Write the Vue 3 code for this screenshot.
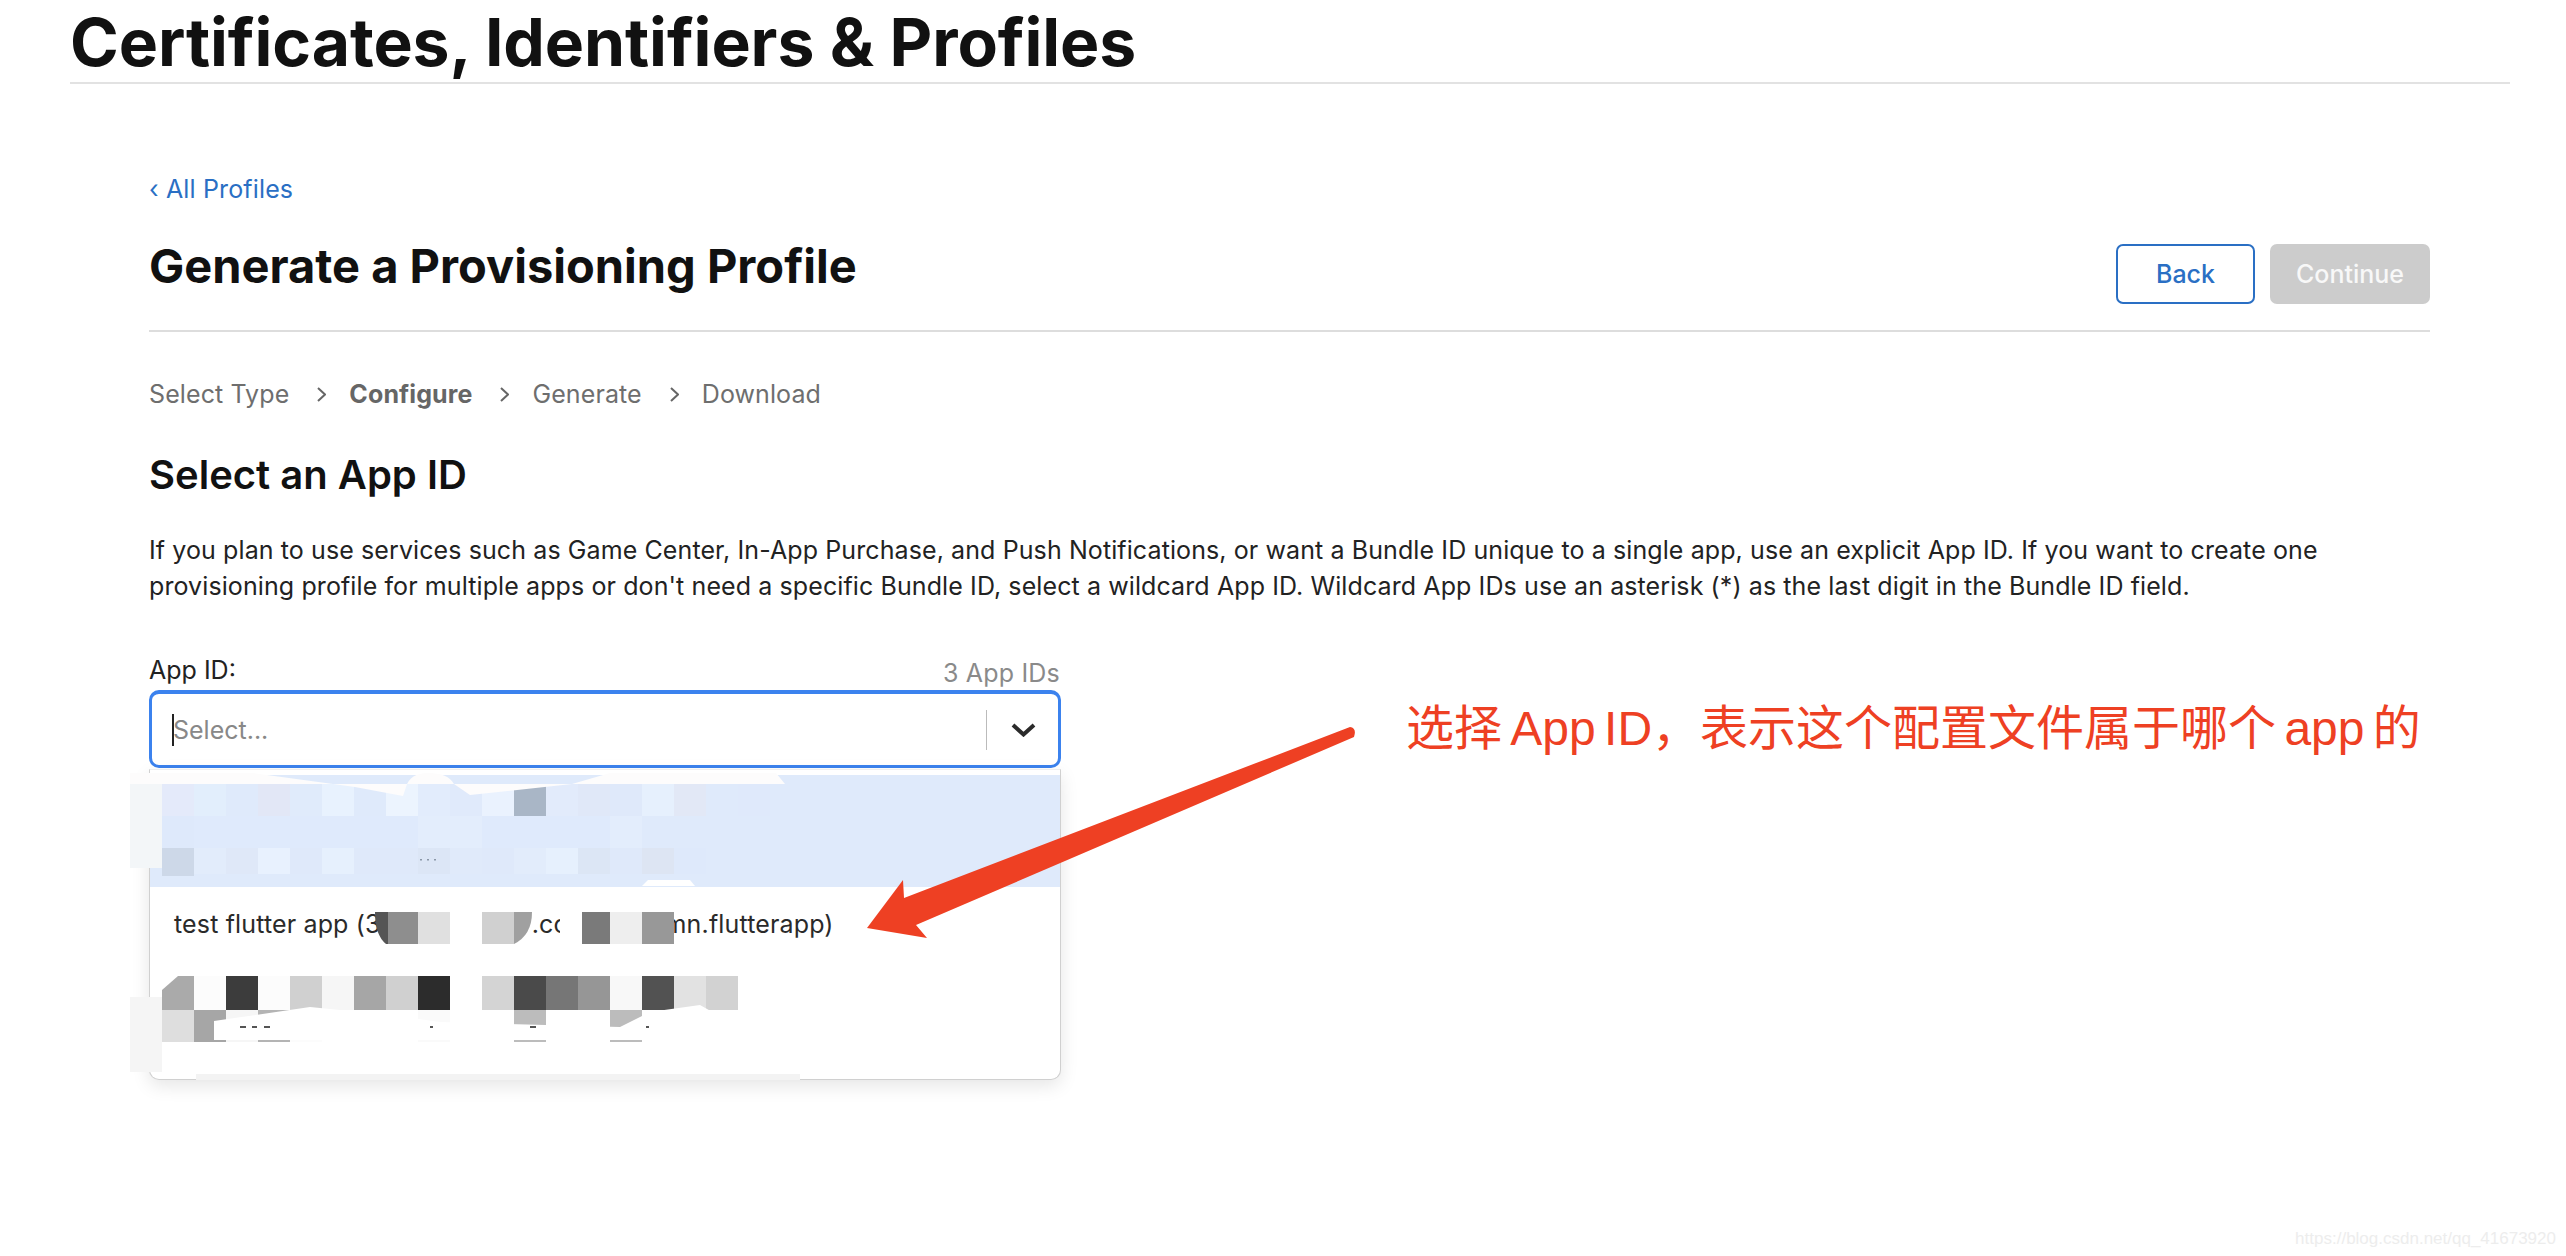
<script setup>
const sel1 = ['#e4eafa','#e2eefc','#dfeafb','#e2e7f6','#e0ebfb','#e8f2fe','#dfeafb','#ecf4fe','#e2ecfc','#e0eafb','#eaf2fe','#a9b6c6','#e2ebfb','#e0e8f8','#dfe9fa','#e6f0fd','#e2e8f6','#dfeafb','#dfe9fb']
const sel2 = ['#dee9fb','#dfeafc','#dfeafc','#dfeafc','#dfeafc','#dfeafc','#dfeafc','#dfeafc','#e3edfc','#e3edfc','#dfeafc','#dfeafc','#dfeafc','#dfeafc','#e3edfc']
const sel3 = ['#cdd8e8','#e2ecfb','#dfe8f8','#e8f1fe','#dfe9fa','#e6f0fd','#dfe9fa','#dfe9fa','#dce6f6','#e0eafa','#dfe9fa','#e2ecfb','#e6f0fd','#dce6f5','#dfe9fa','#dde5f3','#dee9fb']
const test1 = { 7:'#8e8e8e', 8:'#e0e0e0', 10:'#d0d0d0', 13:'#7a7a7a', 14:'#eeeeee', 15:'#989898' }
const low1 = ['#aaaaaa','#fcfcfc','#3c3c3c','#fcfcfc','#d0d0d0','#f6f6f6','#a6a6a6','#d0d0d0','#2c2c2c','#ffffff','#d4d4d4','#4a4a4a','#767676','#969696','#f8f8f8','#525252','#e2e2e2','#d2d2d2']
const low2 = ['#dedede','#a6a6a6','#f6f6f6','#b4b4b4','#fcfcfc','#ffffff','#ffffff','#ffffff','#fafafa','#ffffff','#ffffff','#bcbcbc','#ffffff','#ffffff','#bcbcbc']
const cx = k => 162 + k * 32
const cells = []
sel1.forEach((c, k) => cells.push({ x: cx(k), y: 784, w: 32, h: 32, c }))
sel2.forEach((c, k) => cells.push({ x: cx(k), y: 816, w: 32, h: 32, c }))
sel3.forEach((c, k) => cells.push({ x: cx(k), y: 848, w: 32, h: k === 0 ? 28 : 26, c }))
Object.entries(test1).forEach(([k, c]) => cells.push({ x: cx(+k), y: 912, w: 32, h: 32, c }))
low1.forEach((c, k) => cells.push({ x: cx(k), y: 976, w: 32, h: 34, c }))
low2.forEach((c, k) => cells.push({ x: cx(k), y: 1010, w: 32, h: 32, c }))
</script>

<template>
  <div class="page">
    <header class="top"><h1>Certificates, Identifiers &amp; Profiles</h1></header>
    <main class="main">
      <a class="backlink">‹ All Profiles</a>
      <div class="headrow">
        <h2>Generate a Provisioning Profile</h2>
        <div class="btns">
          <button class="btn back">Back</button>
          <button class="btn cont">Continue</button>
        </div>
      </div>
      <nav class="steps">
        <span>Select Type</span>
        <svg class="sep" width="9" height="15" viewBox="0 0 9 15"><path d="M1 1l7 6.500L1 14" fill="none" stroke="#666" stroke-width="2"/></svg>
        <b>Configure</b>
        <svg class="sep" width="9" height="15" viewBox="0 0 9 15"><path d="M1 1l7 6.500L1 14" fill="none" stroke="#666" stroke-width="2"/></svg>
        <span>Generate</span>
        <svg class="sep" width="9" height="15" viewBox="0 0 9 15"><path d="M1 1l7 6.500L1 14" fill="none" stroke="#666" stroke-width="2"/></svg>
        <span>Download</span>
      </nav>
      <h3>Select an App ID</h3>
      <p class="desc">If you plan to use services such as Game Center, In-App Purchase, and Push Notifications, or want a Bundle ID unique to a single app, use an explicit App ID. If you want to create one provisioning profile for multiple apps or don't need a specific Bundle ID, select a wildcard App ID. Wildcard App IDs use an asterisk (*) as the last digit in the Bundle ID field.</p>
      <div class="field">
        <div class="labels"><label>App ID:</label><span>3 App IDs</span></div>
        <div class="select">
          <i class="caret"></i><span class="ph">Select...</span>
          <i class="divider"></i>
          <svg class="chev" width="25" height="14" viewBox="0 0 25 14"><path d="M2 2l10.500 9.500L23 2" fill="none" stroke="#2b2b2b" stroke-width="4"/></svg>
        </div>
        <div class="menu">
          <div class="opt active"></div>
          <div class="opt testrow"><span>test flutter app (3</span><span class="co">.co</span><span class="mn">mn.flutterapp)</span></div>
          <div class="opt"></div>
        </div>
      </div>
    </main>

    <svg class="overlay" width="2566" height="1256" viewBox="0 0 2566 1256">
      <rect x="130" y="773" width="32" height="95" fill="#f3f6f8"/>
      <rect x="130" y="997" width="32" height="75" fill="#f5f5f5"/>
      <rect v-for="(r, i) in cells" :key="i" :x="r.x" :y="r.y" :width="r.w" :height="r.h" :fill="r.c"/>
      <path d="M130 773H253L355 787L403 796L406 787Q410 773 428 773Q448 773 454 784L470 795L572 784L610 773H776L785 784H130Z" fill="#fdfcfc"/>
      <path d="M642 886L648 880H690L695 886Z" fill="#fff"/>
      <path d="M420 859h2v1.500h-2zM427 859h2v1.500h-2zM434 859h2v1.500h-2z" fill="#8a97a8"/>
      <path d="M375 912H388V944H386Q375 935 375 912Z" fill="#555"/>
      <path d="M514 912H532Q532 935 514 944Z" fill="#a0a0a0"/>
      <rect x="560" y="912" width="22" height="32" fill="#fff"/>
      <path d="M162 976V990L178 976Z" fill="#fff"/>
      <path d="M214 1021L310 1007L390 1015L440 1022L620 1027L650 1012L700 1005L730 1022V1040H214Z" fill="#fff"/>
      <path d="M240 1026h6v2h-6zM252 1026h5v2h-5zM264 1026h6v2h-6zM430 1026h3v2h-3zM530 1026h6v2h-6zM646 1026h3v2h-3z" fill="#555"/>
      <rect x="196" y="1074" width="604" height="6" fill="#f3f3f3"/>
      <path d="M1350 727Q1357 728 1354 737L916 925L927 938L867 928L903 880L904 898Z" fill="#ee4023"/>
    </svg>

    <div class="note">选择 App ID，表示这个配置文件属于哪个 app 的</div>
    <div class="wm">https://blog.csdn.net/qq_41673920</div>
  </div>
</template>

<style>
html, body { margin: 0; background: #fff; }
</style>
<style scoped>
.page { position: relative; width: 2566px; height: 1256px; overflow: hidden; background: #fff; color: #111; font-family: Inter, "Liberation Sans", sans-serif; }
.top { margin: 0 56px 0 70px; height: 82px; border-bottom: 2px solid #e2e2e2; }
h1 { margin: 0; font-size: 66px; line-height: 84px; font-weight: 700; letter-spacing: -.1px; color: #111; }
.main { margin: 0 136px 0 149px; padding-top: 90px; }
.backlink { display: block; font-size: 25px; line-height: 30px; letter-spacing: .15px; color: #2a6fc4; }
.headrow { display: flex; justify-content: space-between; align-items: flex-end; box-sizing: border-box; padding-bottom: 26px; border-bottom: 2px solid #ddd; height: 128px; }
h2 { margin: 0 0 10px; font-size: 47px; line-height: 56px; font-weight: 700; }
.btns { display: flex; gap: 15px; }
.btn { height: 60px; border-radius: 7px; font: 500 25px Inter, sans-serif; box-sizing: border-box; padding: 0; }
.back { width: 139px; background: #fff; border: 2px solid #2a6fc4; color: #2a6fc4; }
.cont { width: 160px; background: #ccc; border: 0; color: #f8f8f8; }
.steps { display: flex; align-items: center; height: 40px; margin-top: 42px; font-size: 25px; letter-spacing: .1px; color: #6e6e6e; }
.steps b { font-weight: 700; color: #666; }
.sep { margin: 0 23px 0 28px; }
h3 { margin: 38px 0 0; font-size: 40px; line-height: 46px; font-weight: 600; }
.desc { margin: 34px 0 0; font-size: 25px; line-height: 36px; letter-spacing: .1px; color: #222; }
.field { width: 912px; margin-top: 46px; }
.labels { display: flex; justify-content: space-between; align-items: flex-end; height: 40px; font-size: 25px; color: #222; }
.labels label { margin-bottom: 5px; }
.labels span { color: #8a8a8a; margin-bottom: 2px; margin-right: 1px; letter-spacing: .2px; }
.select { display: flex; align-items: center; height: 78px; box-sizing: border-box; border: 3px solid #3b82ee; border-top-width: 4px; border-radius: 10px; padding-left: 20px; background: #fff; font-size: 25px; }
.caret { width: 2px; height: 32px; background: #222; }
.ph { flex: 1; color: #888; margin-left: -1px; }
.divider { width: 1px; height: 40px; background: #bbb; margin-right: 24px; }
.chev { margin-right: 22px; }
.menu { margin-top: 1px; box-sizing: border-box; height: 311px; padding-top: 5px; border: 1px solid #d0d0d0; border-top-color: #eee; border-radius: 0 0 10px 10px; box-shadow: 0 6px 18px rgba(0,0,0,.1); background: #fff; }
.opt { font-size: 25px; color: #2a2a2a; }
.active { height: 112px; background: #dfeafb; }
.testrow { display: flex; align-items: center; height: 74px; padding-left: 24px; letter-spacing: .15px; }
.co { margin-left: 151px; }
.mn { margin-left: 96px; }
.overlay { position: absolute; left: 0; top: 0; pointer-events: none; }
.note { position: absolute; left: 1406px; top: 696px; font: 48px/66px "Liberation Sans", "Noto Sans CJK SC", sans-serif; color: #ee4023; white-space: nowrap; word-spacing: -5px; }
.wm { position: absolute; right: 10px; top: 1228px; font: 17px/22px "Liberation Sans", sans-serif; color: #ededed; }
</style>
